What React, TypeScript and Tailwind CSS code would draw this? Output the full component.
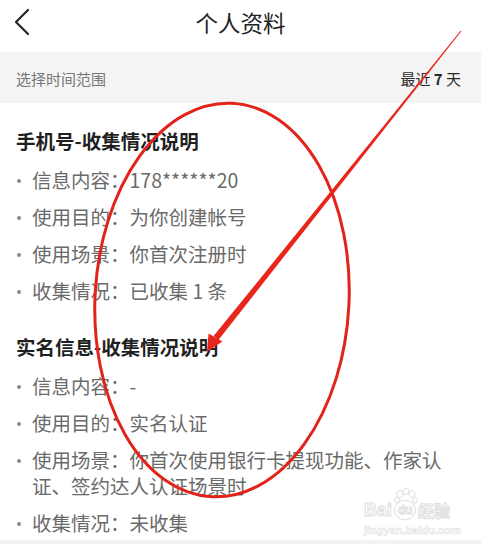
import React from "react";

const font = { fontFamily: '"Noto Sans CJK SC", "Noto Sans", sans-serif' };

function Item({ label, value }: { label: string; value: string }) {
  return (
    <li className="flex items-start">
      <span className="w-[16px] shrink-0 flex justify-start pt-[12px]">
        <span className="ml-[1px] w-[4px] h-[4px] rounded-full bg-[#8a8a8a]" />
      </span>
      <span className="text-[19.5px] leading-[26px] text-[#6a6a6a]">
        {label}：{value}
      </span>
    </li>
  );
}

function Section({ title, items, className }: { title: string; items: [string, string][]; className?: string }) {
  return (
    <section className={className}>
      <h2 className="text-[19.5px] leading-[28px] font-bold text-[#1f1f1f]">{title}</h2>
      <ul className="mt-[12px] flex flex-col gap-[11px]">
        {items.map(([l, v]) => (
          <Item key={l} label={l} value={v} />
        ))}
      </ul>
    </section>
  );
}

export default function App() {
  return (
    <div className="relative w-[481px] h-[544px] overflow-hidden bg-white" style={font}>
      <header className="h-[52px] flex items-center pb-[8px] relative">
        <svg className="absolute left-[13px] top-[8px]" width="18" height="28" viewBox="0 0 18 28">
          <path d="M15 2 L3 14 L15 26" fill="none" stroke="#262626" strokeWidth="2.2" strokeLinecap="round" strokeLinejoin="round" />
        </svg>
        <h1 className="w-full text-center text-[22.5px] leading-[30px] text-[#222]">个人资料</h1>
      </header>
      <div className="h-[51px] bg-[#f4f4f4] flex items-center justify-between pl-[16px] pr-[20px] pt-[4px]">
        <span className="text-[15px] text-[#777]">选择时间范围</span>
        <span className="text-[15px] text-[#2a2a2a]">最近 <span className="font-bold">7</span> 天</span>
      </div>
      <div className="pl-[16px] pr-[24px] pt-[24px]">
        <Section
          title="手机号-收集情况说明"
          items={[
            ["信息内容", "178******20"],
            ["使用目的", "为你创建帐号"],
            ["使用场景", "你首次注册时"],
            ["收集情况", "已收集 1 条"],
          ]}
        />
        <Section
          className="mt-[29px]"
          title="实名信息-收集情况说明"
          items={[
            ["信息内容", "-"],
            ["使用目的", "实名认证"],
            ["使用场景", "你首次使用银行卡提现功能、作家认证、签约达人认证场景时"],
            ["收集情况", "未收集"],
          ]}
        />
      </div>
      <div className="absolute left-0 right-0 bottom-0 h-[4px] bg-[#f2f2f2]" />

      {/* Baidu watermark */}
      <div className="absolute left-[364px] top-[488px] w-[100px] h-[50px] pointer-events-none select-none">
        <svg className="absolute left-[30px] top-[0px]" width="24" height="20" viewBox="0 0 24 20">
          <g fill="none" stroke="#e0e0e0" strokeWidth="1">
            <ellipse cx="6" cy="6" rx="3" ry="3.5" />
            <ellipse cx="12" cy="3.5" rx="3" ry="3" />
            <ellipse cx="18" cy="6" rx="3" ry="3.5" />
            <ellipse cx="3" cy="12" rx="2.5" ry="3" />
            <ellipse cx="21" cy="12" rx="2.5" ry="3" />
          </g>
        </svg>
        <div className="absolute left-0 top-[12px] flex items-center gap-[2px] text-[18px] leading-[20px] font-bold text-white" style={{ WebkitTextStroke: "1px #dedede", fontFamily: '"Liberation Sans", sans-serif' }}>
          <span>Bai</span>
          <span className="w-[22px] h-[20px] rounded-full border border-[#dedede] text-[12px] flex items-center justify-center">du</span>
          <span className="text-[16px]" style={font}>经验</span>
        </div>
        <div className="absolute left-0 top-[35px] text-[11px] leading-[14px] text-white font-bold" style={{ WebkitTextStroke: "0.6px #e2e2e2", fontFamily: '"Liberation Sans", sans-serif' }}>
          jingyan.baidu.com
        </div>
      </div>

      {/* Red annotation overlay */}
      <svg className="absolute inset-0 pointer-events-none" width="481" height="544" viewBox="0 0 481 544">
        <ellipse cx="222" cy="300" rx="127" ry="197" transform="rotate(3 222 300)" fill="none" stroke="#e2231a" strokeWidth="3" />
        <polygon points="461.4,31.3 460.6,30.7 213.6,336.1 218.4,339.9" fill="#e8261c" />
        <polygon points="207,352 208.6,333.5 222.4,341.5" fill="#e8261c" />
      </svg>
    </div>
  );
}
